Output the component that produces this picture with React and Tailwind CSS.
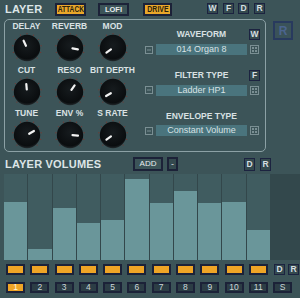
import React from "react";

function Knob({ angle }) {
  const ticks = [];
  for (let i = 0; i < 11; i++) {
    const a = ((-135 + i * 27) * Math.PI) / 180;
    ticks.push(
      <circle key={i} cx={15 + 14.3 * Math.sin(a)} cy={15 - 14.3 * Math.cos(a)} r={0.7} fill="#6e3c36" />
    );
  }
  const a = (angle * Math.PI) / 180;
  const x1 = 15 + 2.5 * Math.sin(a);
  const y1 = 15 - 2.5 * Math.cos(a);
  const x2 = 15 + 8 * Math.sin(a);
  const y2 = 15 - 8 * Math.cos(a);
  return (
    <svg width="30" height="30" viewBox="0 0 30 30">
      <defs>
        <radialGradient id="kg" cx="50%" cy="40%" r="60%">
          <stop offset="0%" stopColor="#161b1e" />
          <stop offset="85%" stopColor="#0a0d0f" />
          <stop offset="100%" stopColor="#22292c" />
        </radialGradient>
      </defs>
      {ticks}
      <circle cx="15" cy="15" r="13.2" fill="url(#kg)" />
      <line x1={x1} y1={y1} x2={x2} y2={y2} stroke="#f2f2f2" strokeWidth="2.2" strokeLinecap="round" />
    </svg>
  );
}

function KnobCell({ label, angle }) {
  return (
    <div className="w-[43px] h-[43.5px] flex flex-col items-center">
      <div className="h-[10px] leading-[10px] text-[8.5px] font-bold text-[#d9e1e3] whitespace-nowrap">{label}</div>
      <div className="mt-[2px]">
        <Knob angle={angle} />
      </div>
    </div>
  );
}

function MinusIcon() {
  return (
    <svg width="8" height="8" viewBox="0 0 8 8">
      <rect x="0.5" y="0.5" width="7" height="7" fill="none" stroke="#7a8f93" strokeWidth="1" />
      <line x1="2" y1="4" x2="6" y2="4" stroke="#7a8f93" strokeWidth="1" />
    </svg>
  );
}

function GridIcon() {
  return (
    <svg width="9" height="9" viewBox="0 0 9 9">
      <rect x="0.5" y="0.5" width="8" height="8" fill="none" stroke="#7a8f93" strokeWidth="1" />
      <rect x="2" y="2" width="2" height="2" fill="#7a8f93" />
      <rect x="5" y="2" width="2" height="2" fill="#7a8f93" />
      <rect x="2" y="5" width="2" height="2" fill="#7a8f93" />
      <rect x="5" y="5" width="2" height="2" fill="#7a8f93" />
    </svg>
  );
}

function SmallBtn({ children, className = "" }) {
  return (
    <div
      className={
        "w-[11px] h-[11px] border border-[#1c2340] bg-[#34494e] flex items-center justify-center text-[8.5px] font-bold text-[#d6dee1] leading-none " +
        className
      }
    >
      {children}
    </div>
  );
}

function Row({ label, btn, value }) {
  return (
    <div className="h-[43.5px] flex flex-col">
      <div className="h-[11px] flex items-center">
        <div className="ml-[11px] w-[91px] text-center text-[8.5px] font-bold text-[#d9e1e3] leading-none">{label}</div>
        {btn ? <SmallBtn className="ml-[2px]">{btn}</SmallBtn> : null}
      </div>
      <div className="mt-[4px] h-[11px] flex items-center">
        <MinusIcon />
        <div className="ml-[3px] w-[91px] h-[11px] bg-[#4a747d] flex items-center justify-center text-[9px] text-[#d8e2e4] leading-none">
          {value}
        </div>
        <div className="ml-[3px]">
          <GridIcon />
        </div>
      </div>
    </div>
  );
}

const fills = [58, 11, 52, 37, 40, 81, 57, 69, 57, 58, 30];
const nums = ["1", "2", "3", "4", "5", "6", "7", "8", "9", "10", "11"];

export default function App() {
  return (
    <div className="w-[300px] h-[298px] bg-[#3c5458] font-['Liberation_Sans',Arial,sans-serif] flex flex-col overflow-hidden select-none">
      {/* header */}
      <div className="h-[19px] flex items-start pt-[3px]">
        <div className="ml-[5px] w-[50px] h-[13px] leading-[13px] text-[11px] font-bold text-[#dde5e7] tracking-[0.2px]">LAYER</div>
        <div className="w-[31px] h-[13px] border-2 border-[#1c2238] bg-[#e9a72a] flex items-center justify-center overflow-hidden">
          <span className="inline-block scale-x-[0.78] text-[8.5px] font-bold text-[#2b230e] leading-none">ATTACK</span>
        </div>
        <div className="ml-[12px] w-[31px] h-[13px] border-2 border-[#1c2238] bg-[#3c5458] flex items-center justify-center">
          <span className="text-[7.5px] font-bold text-[#e4eaec] leading-none">LOFI</span>
        </div>
        <div className="ml-[14px] w-[29px] h-[13px] border-2 border-[#1c2238] bg-[#e9a72a] flex items-center justify-center overflow-hidden">
          <span className="inline-block scale-x-[0.82] text-[8.5px] font-bold text-[#2b230e] leading-none">DRIVE</span>
        </div>
        <SmallBtn className="ml-[35px]">W</SmallBtn>
        <SmallBtn className="ml-[5px]">F</SmallBtn>
        <SmallBtn className="ml-[4px]">D</SmallBtn>
        <SmallBtn className="ml-[5px]">R</SmallBtn>
      </div>

      {/* top section */}
      <div className="flex items-start">
        <div className="ml-[4px] w-[262px] h-[133px] border border-[#8ca1a5] rounded-[5px] flex">
          <div className="pt-[1px] flex flex-col">
            <div className="flex">
              <KnobCell label="DELAY" angle={-25} />
              <KnobCell label="REVERB" angle={100} />
              <KnobCell label="MOD" angle={-125} />
            </div>
            <div className="flex">
              <KnobCell label="CUT" angle={-5} />
              <KnobCell label="RESO" angle={35} />
              <KnobCell label="BIT DEPTH" angle={-120} />
            </div>
            <div className="flex">
              <KnobCell label="TUNE" angle={60} />
              <KnobCell label="ENV %" angle={95} />
              <KnobCell label="S RATE" angle={-125} />
            </div>
          </div>
          <div className="ml-[11px] pt-[9px] flex flex-col">
            <Row label="WAVEFORM" btn="W" value="014 Organ 8" />
            <Row label="FILTER TYPE" btn="F" value="Ladder HP1" />
            <Row label="ENVELOPE TYPE" value="Constant Volume" />
          </div>
        </div>
        <div className="ml-[7px] mt-[2px] w-[20px] h-[19px] border-2 border-[#283a5e] bg-[#3a5259] flex items-center justify-center text-[12px] font-bold text-[#4b648e] leading-none">
          R
        </div>
      </div>

      {/* layer volumes header */}
      <div className="mt-[5px] h-[14px] flex items-center">
        <div className="ml-[5px] w-[128px] text-[11px] font-bold text-[#dde5e7] leading-none tracking-[0.2px]">LAYER VOLUMES</div>
        <div className="w-[30px] h-[14px] border-2 border-[#1c2238] bg-[#3c5458] flex items-center justify-center text-[8px] text-[#e6ecee] leading-none">
          ADD
        </div>
        <div className="ml-[4px] w-[11px] h-[14px] border-2 border-[#1c2238] bg-[#34494e] flex items-center justify-center text-[9px] text-[#d6dee1] leading-none">
          -
        </div>
        <SmallBtn className="ml-[66px] w-[10px] h-[13px]">D</SmallBtn>
        <SmallBtn className="ml-[5px] w-[10px] h-[13px]">R</SmallBtn>
      </div>

      {/* bars */}
      <div className="mt-[3px] h-[86px] flex">
        <div className="ml-[4px] w-[266px] h-full flex gap-px bg-[#33474b]">
          {fills.map((f, i) => (
            <div key={i} className="flex-1 h-full bg-[#405c60] flex flex-col justify-end">
              <div className="w-full bg-[#6a969a]" style={{ height: f }} />
            </div>
          ))}
        </div>
        <div className="flex-1 h-full bg-[#33484c]" />
      </div>

      {/* orange row */}
      <div className="mt-[4px] h-[11px] flex items-center">
        <div className="ml-[4px] w-[266px] flex gap-px">
          {fills.map((_, i) => (
            <div key={i} className="flex-1 flex justify-center">
              <div className="w-[19px] h-[11px] border-2 border-[#1c2238] bg-[#efa526]" />
            </div>
          ))}
        </div>
        <SmallBtn className="ml-[4px] w-[10px]">D</SmallBtn>
        <SmallBtn className="ml-[3px] w-[10px]">R</SmallBtn>
      </div>

      {/* number row */}
      <div className="mt-[7px] h-[11px] flex items-center">
        <div className="ml-[4px] w-[266px] flex gap-px">
          {nums.map((n, i) => (
            <div key={i} className="flex-1 flex justify-center">
              <div
                className={
                  "w-[19px] h-[11px] border-2 border-[#1c2238] flex items-center justify-center text-[8.5px] leading-none " +
                  (i === 0 ? "bg-[#efa526] text-[#fff6dc]" : "bg-[#2c3d45] text-[#cbd6d9]")
                }
              >
                {n}
              </div>
            </div>
          ))}
        </div>
        <div className="ml-[3px] w-[19px] h-[11px] border-2 border-[#1c2238] bg-[#2c3d45] flex items-center justify-center text-[8.5px] text-[#cbd6d9] leading-none">
          S
        </div>
      </div>
    </div>
  );
}
